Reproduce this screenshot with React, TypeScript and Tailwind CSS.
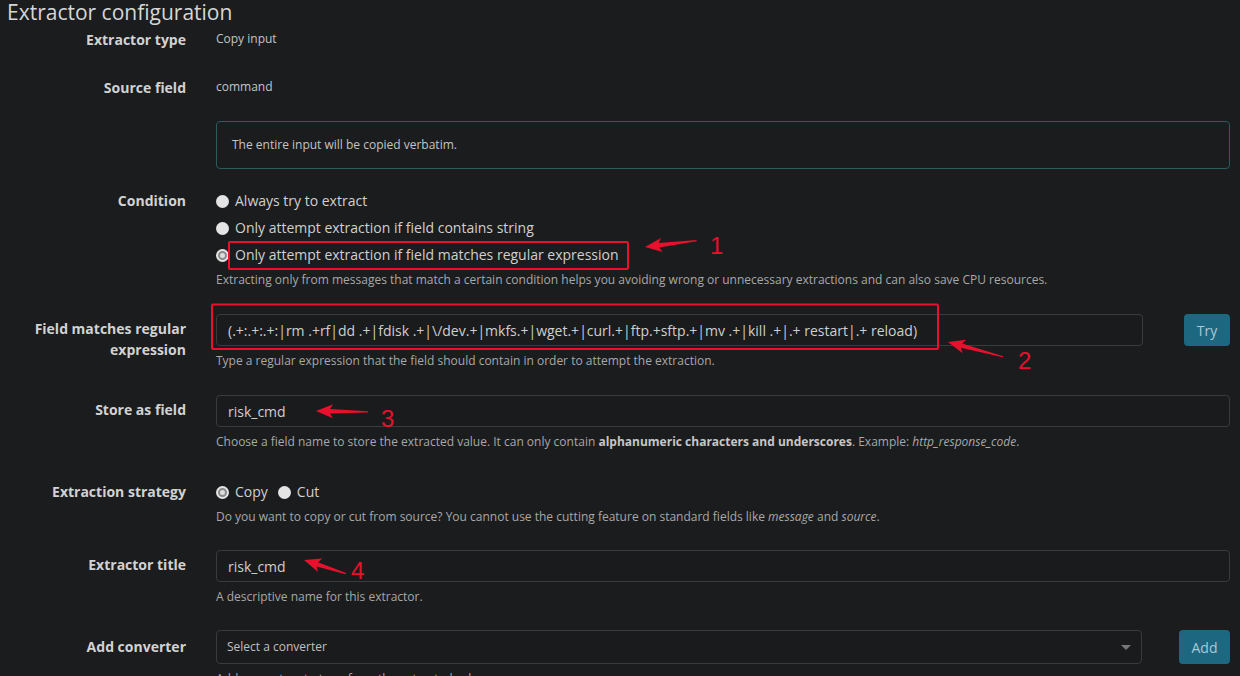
import React from "react";

const font = { fontFamily: '"Open Sans", "Noto Sans", sans-serif' };

function Radio({ checked }: { checked?: boolean }) {
  return (
    <span className="w-[13px] h-[13px] rounded-full bg-[#e4e4e4] flex items-center justify-center shrink-0">
      {checked && <span className="w-[9px] h-[9px] rounded-full border-[2px] border-[#8a8a8a] bg-[#dcdcdc]" />}
    </span>
  );
}

function Label({ children, pt = "pt-[4px]" }: { children: React.ReactNode; pt?: string }) {
  return <div className={`text-right text-[14px] leading-[21px] font-bold text-[#d2d2d2] ${pt}`}>{children}</div>;
}

function Help({ children }: { children: React.ReactNode }) {
  return <div className="mt-[6px] text-[12px] leading-[17px] text-[#a8a8a8]">{children}</div>;
}

function TextInput({ value }: { value: string }) {
  return (
    <div className="h-[32px] flex items-center border border-[#3a3b3d] rounded-[4px] bg-[#1a1b1d] px-[11px] text-[14px] text-[#cfcfcf] whitespace-nowrap overflow-hidden">
      {value}
    </div>
  );
}

function Arrow({ x, y, angle, len }: { x: number; y: number; angle: number; len: number }) {
  return (
    <polygon
      transform={`translate(${x} ${y}) rotate(${angle})`}
      points={`0,0 17,-7 14,-2.2 ${len},-0.6 ${len},0.6 14,2.2 17,7`}
      fill="#e8102c"
    />
  );
}

export default function App() {
  return (
    <div className="relative w-[1240px] h-[676px] overflow-hidden bg-[#1b1c1e] text-[#cfcfcf]" style={font}>
      {/* Title */}
      <h1 className="pl-[7px] text-[21px] leading-[24px] text-[#d6d6d6]">Extractor configuration</h1>

      <div className="grid grid-cols-[186px_1fr] gap-x-[30px] pr-[10px]">
        {/* Extractor type */}
        <div className="mt-[6px] text-right text-[14px] leading-[20px] font-bold text-[#d2d2d2]">Extractor type</div>
        <div className="mt-[6px] text-[12px] leading-[18px] text-[#c4c4c4]">Copy input</div>

        {/* Source field */}
        <div className="mt-[28px] text-right text-[14px] leading-[20px] font-bold text-[#d2d2d2]">Source field</div>
        <div className="mt-[28px] text-[12px] leading-[18px] text-[#c4c4c4]">command</div>

        {/* Alert */}
        <div />
        <div className="mt-[23px] h-[48px] border border-[#2d5a5c] rounded-[4px] flex items-center px-[15px] text-[12px] text-[#c4c4c4]">
          The entire input will be copied verbatim.
        </div>

        {/* Condition */}
        <div className="mt-[22px] text-right text-[14px] leading-[20px] font-bold text-[#d2d2d2]">Condition</div>
        <div className="mt-[22px]">
          <div className="flex flex-col gap-[7px] text-[14px] leading-[20px] text-[#d0d0d0]">
            <label className="flex items-center gap-[6px] pl-[0px]">
              <Radio />
              Always try to extract
            </label>
            <label className="flex items-center gap-[6px] pl-[0px]">
              <Radio />
              Only attempt extraction if field contains string
            </label>
            <label className="flex items-center gap-[6px] pl-[0px]">
              <Radio checked />
              Only attempt extraction if field matches regular expression
            </label>
          </div>
          <Help>
            Extracting only from messages that match a certain condition helps you avoiding wrong or unnecessary extractions and can also save CPU resources.
          </Help>
        </div>

        {/* Regex */}
        <div className="mt-[26px]">
          <Label>
            Field matches regular
            <br />
            expression
          </Label>
        </div>
        <div className="mt-[26px]">
          <div className="flex">
            <div className="flex-1">
              <TextInput value={"(.+:.+:.+:|rm .+rf|dd .+|fdisk .+|\\/dev.+|mkfs.+|wget.+|curl.+|ftp.+sftp.+|mv .+|kill .+|.+ restart|.+ reload)"} />
            </div>
            <div className="w-[87px] flex justify-end">
              <button className="h-[32px] w-[46px] rounded-[4px] bg-[#1e6781] text-[14px] text-[#a9c9d6]">Try</button>
            </div>
          </div>
          <Help>Type a regular expression that the field should contain in order to attempt the extraction.</Help>
        </div>

        {/* Store as field */}
        <div className="mt-[26px]">
          <Label>Store as field</Label>
        </div>
        <div className="mt-[26px]">
          <TextInput value="risk_cmd" />
          <Help>
            Choose a field name to store the extracted value. It can only contain{" "}
            <b className="font-bold text-[#c6c6c6]">alphanumeric characters and underscores</b>. Example:{" "}
            <i>http_response_code</i>.
          </Help>
        </div>

        {/* Extraction strategy */}
        <div className="mt-[32px] text-right text-[14px] leading-[20px] font-bold text-[#d2d2d2]">Extraction strategy</div>
        <div className="mt-[32px]">
          <div className="flex items-center text-[14px] leading-[20px] text-[#d0d0d0]">
            <label className="flex items-center gap-[6px]">
              <Radio checked />
              Copy
            </label>
            <label className="flex items-center gap-[6px] ml-[10px]">
              <Radio />
              Cut
            </label>
          </div>
          <Help>
            Do you want to copy or cut from source? You cannot use the cutting feature on standard fields like <i>message</i> and{" "}
            <i>source</i>.
          </Help>
        </div>

        {/* Extractor title */}
        <div className="mt-[25px]">
          <Label>Extractor title</Label>
        </div>
        <div className="mt-[25px]">
          <TextInput value="risk_cmd" />
          <Help>A descriptive name for this extractor.</Help>
        </div>

        {/* Add converter */}
        <div className="mt-[25px]">
          <Label pt="pt-[6px]">Add converter</Label>
        </div>
        <div className="mt-[25px]">
          <div className="flex">
            <div className="flex-1 h-[34px] flex items-center justify-between border border-[#3a3b3d] rounded-[4px] bg-[#1a1b1d] pl-[10px] pr-[10px] text-[12px] text-[#c0c0c0]">
              <span>Select a converter</span>
              <span className="w-0 h-0 border-l-[5px] border-r-[5px] border-t-[5px] border-l-transparent border-r-transparent border-t-[#777]" />
            </div>
            <div className="w-[88px] flex justify-end">
              <button className="h-[34px] w-[51px] rounded-[4px] bg-[#1e6781] text-[14px] text-[#a9c9d6]">Add</button>
            </div>
          </div>
          <Help>Add converters to transform the extracted value.</Help>
        </div>
      </div>

      {/* Red annotations */}
      <svg className="absolute inset-0 pointer-events-none" width="1240" height="676">
        <rect x="229" y="242" width="399" height="27" fill="none" stroke="#e8102c" strokeWidth="2" rx="1" />
        <rect x="212" y="304.5" width="726" height="44.5" fill="none" stroke="#e8102c" strokeWidth="2" rx="1" />
        <Arrow x={645} y={247} angle={-7} len={52} />
        <Arrow x={948} y={342} angle={15} len={57} />
        <Arrow x={316} y={411} angle={1} len={52} />
        <Arrow x={304} y={560} angle={18} len={44} />
        <g fill="#e8102c" style={{ fontFamily: '"Liberation Sans", sans-serif', fontSize: "24px" }}>
          <text x="710" y="254">1</text>
          <text x="1018" y="369">2</text>
          <text x="381" y="427">3</text>
          <text x="351" y="579">4</text>
        </g>
      </svg>
    </div>
  );
}
